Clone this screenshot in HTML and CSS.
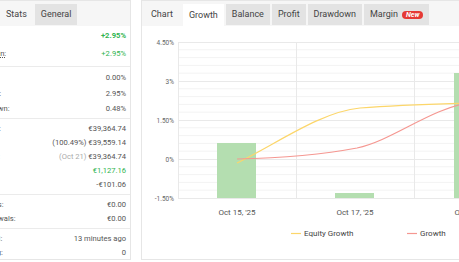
FILE: index.html
```html
<!DOCTYPE html>
<html lang="en">
<head>
    <meta charset="UTF-8">
    <meta name="viewport" content="width=device-width, initial-scale=1.0">
    <title>Stats</title>
    <link rel="stylesheet" href="styles.css">
</head>
<body>

<div class="page">

    <!-- stats panel, left side is cut off -->
    <div class="panel stats">
        <div class="tabs">
            <span class="tab plain">Stats</span>
            <span class="tab">General</span>
        </div>

        <div class="group first">
            <div class="row tall"><span class="label">Gain:</span><span class="val up bold">+2.95%</span></div>
            <div class="row tall"><span class="label dotted">Abs. Gain:</span><span class="val up">+2.95%</span></div>
        </div>
        <div class="group">
            <div class="row mid"><span class="label">Daily:</span><span class="val">0.00%</span></div>
            <div class="row mid"><span class="label">Monthly:</span><span class="val">2.95%</span></div>
            <div class="row"><span class="label">Drawdown:</span><span class="val">0.48%</span></div>
        </div>
        <div class="group">
            <div class="row"><span class="label">Balance:</span><span class="val">€39,364.74</span></div>
            <div class="row"><span class="label">Equity:</span><span class="val">(100.49%) €39,559.14</span></div>
            <div class="row"><span class="label">Highest:</span><span class="val"><span class="muted">(Oct 21)</span> €39,364.74</span></div>
            <div class="row"><span class="label">Profit:</span><span class="val up">€1,127.16</span></div>
            <div class="row"><span class="label">Interest:</span><span class="val">-€101.06</span></div>
        </div>
        <div class="group">
            <div class="row"><span class="label">Deposits:</span><span class="val">€0.00</span></div>
            <div class="row"><span class="label">Withdrawals:</span><span class="val">€0.00</span></div>
        </div>
        <div class="group last">
            <div class="row"><span class="label">Updated:</span><span class="val">13 minutes ago</span></div>
            <div class="row"><span class="label">Tracking:</span><span class="val">0</span></div>
        </div>
    </div>

    <!-- chart panel -->
    <div class="panel chart">
        <div class="tabs">
            <span class="title">Chart</span>
            <span class="tab active">Growth</span>
            <span class="tab">Balance</span>
            <span class="tab">Profit</span>
            <span class="tab">Drawdown</span>
            <span class="tab">Margin <span class="badge">New</span></span>
        </div>

        <svg class="plot" width="328" height="233" viewBox="142 26 328 233">
            <!-- minor grid -->
            <g stroke="#f3f3f3" stroke-width="1">
                <line x1="178" y1="49.8" x2="470" y2="49.8"/>
                <line x1="178" y1="57.6" x2="470" y2="57.6"/>
                <line x1="178" y1="65.4" x2="470" y2="65.4"/>
                <line x1="178" y1="73.2" x2="470" y2="73.2"/>
                <line x1="178" y1="88.8" x2="470" y2="88.8"/>
                <line x1="178" y1="96.6" x2="470" y2="96.6"/>
                <line x1="178" y1="104.4" x2="470" y2="104.4"/>
                <line x1="178" y1="112.2" x2="470" y2="112.2"/>
                <line x1="178" y1="127.8" x2="470" y2="127.8"/>
                <line x1="178" y1="135.6" x2="470" y2="135.6"/>
                <line x1="178" y1="143.4" x2="470" y2="143.4"/>
                <line x1="178" y1="151.2" x2="470" y2="151.2"/>
                <line x1="178" y1="166.8" x2="470" y2="166.8"/>
                <line x1="178" y1="174.6" x2="470" y2="174.6"/>
                <line x1="178" y1="182.4" x2="470" y2="182.4"/>
                <line x1="178" y1="190.2" x2="470" y2="190.2"/>
            </g>
            <!-- major grid -->
            <g stroke="#e9e9e9" stroke-width="1">
                <line x1="178" y1="42.5" x2="470" y2="42.5"/>
                <line x1="178" y1="81.5" x2="470" y2="81.5"/>
                <line x1="178" y1="120.5" x2="470" y2="120.5"/>
                <line x1="178" y1="159.5" x2="470" y2="159.5"/>
                <line x1="178" y1="198.5" x2="470" y2="198.5"/>
                <line x1="178.5" y1="42" x2="178.5" y2="199"/>
                <line x1="296.5" y1="42" x2="296.5" y2="199"/>
                <line x1="414.5" y1="42" x2="414.5" y2="199"/>
            </g>

            <g class="axis">
                <text x="174" y="44.5">4.50%</text>
                <text x="174" y="83.5">3%</text>
                <text x="174" y="122.5">1.50%</text>
                <text x="174" y="161.5">0%</text>
                <text x="174" y="200.5">-1.50%</text>
            </g>

            <!-- bars -->
            <g fill="#b4deb0">
                <rect x="217" y="143" width="39" height="55"/>
                <rect x="335" y="193" width="39" height="5"/>
                <rect x="454" y="73" width="39" height="125"/>
            </g>

            <!-- lines -->
            <path d="M237,163 C278,143 320,112 360,108 C398,105 434,104 473,103" fill="none" stroke="#fcd66a" stroke-width="1.2"/>
            <path d="M237,159 C280,158 320,155 357,148 C394,140 430,108 473,102" fill="none" stroke="#f59791" stroke-width="1.2"/>

            <g class="xaxis">
                <text x="237" y="215">Oct 15, '25</text>
                <text x="355" y="215">Oct 17, '25</text>
                <text x="473" y="215">Oct 21, '25</text>
            </g>

            <!-- legend -->
            <line x1="291" y1="233.5" x2="301" y2="233.5" stroke="#fcd66a" stroke-width="1.2"/>
            <text class="legend" x="304" y="236">Equity Growth</text>
            <line x1="407" y1="233.5" x2="417" y2="233.5" stroke="#f59791" stroke-width="1.2"/>
            <text class="legend" x="420" y="236">Growth</text>
        </svg>
    </div>

</div>

</body>
</html>
```

FILE: styles.css
```css
html, body {
    margin: 0;
    padding: 0;
    overflow: hidden;
    background: #fff;
}
body {
    font-family: Roboto, "Liberation Sans", sans-serif;
    color: #555;
}
.page {
    display: flex;
    gap: 10px;
    width: 600px;
}
.panel {
    height: 260px;
    box-sizing: border-box;
    border: 1px solid #e6e6e6;
    background: #fff;
    overflow: hidden;
    flex-shrink: 0;
}
.stats {
    width: 167px;
    margin-left: -36px;
}
.chart {
    width: 330px;
}

/* tab header */
.tabs {
    height: 25px;
    box-sizing: border-box;
    padding-top: 3px;
    background: #f6f6f6;
    display: flex;
    align-items: flex-start;
    gap: 2px;
    font-size: 9px;
    color: #444;
}
.tab {
    height: 21px;
    line-height: 21px;
    padding: 0 6px;
    background: #e3e3e3;
    display: flex;
    align-items: center;
    gap: 4px;
}
.tab.plain {
    background: transparent;
    margin-left: 35px;
}
.tab.active {
    background: #fff;
    height: 22px;
}
.title {
    height: 21px;
    line-height: 21px;
    padding: 0 8px 0 9px;
}
.badge {
    background: #e53935;
    color: #fff;
    font-size: 7px;
    font-weight: bold;
    font-style: italic;
    line-height: 8px;
    padding: 0 4px;
    border-radius: 4px;
}

/* stats rows */
.group {
    border-top: 1px solid #ebebeb;
    padding: 2px 4px 3px 7px;
}
.group.first {
    border-top: none;
    padding-top: 0;
    padding-bottom: 4px;
}
.group.last {
    padding-bottom: 0;
}
.row {
    height: 14px;
    display: flex;
    align-items: center;
    justify-content: space-between;
    font-size: 7.6px;
    white-space: nowrap;
}
.row.tall {
    height: 18px;
}
.row.mid {
    height: 16px;
}
.label {
    color: #555;
}
.label.dotted {
    text-decoration: underline dotted;
}
.val {
    color: #555;
}
.up {
    color: #2fb450;
}
.bold {
    font-weight: bold;
}
.muted {
    color: #aaa;
}

/* chart */
.plot {
    display: block;
}
.axis text {
    font-size: 6.5px;
    fill: #666;
    text-anchor: end;
}
.xaxis text {
    font-size: 8px;
    fill: #555;
    text-anchor: middle;
}
.legend {
    font-size: 8px;
    fill: #444;
}
```
